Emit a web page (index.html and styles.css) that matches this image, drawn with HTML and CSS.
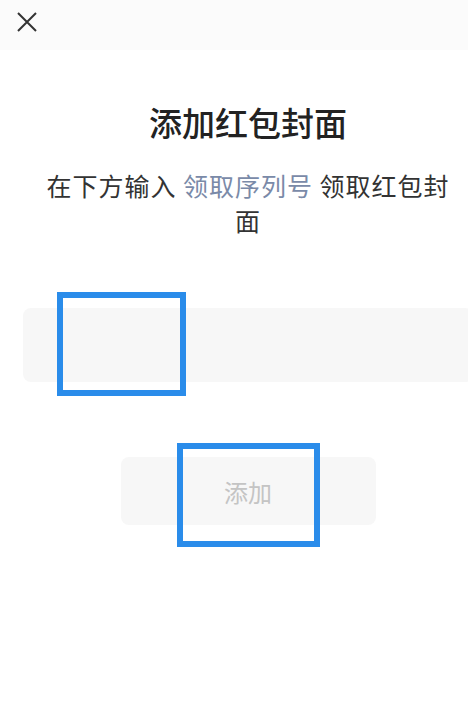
FILE: index.html
```html
<!DOCTYPE html>
<html lang="zh">
<head>
<meta charset="utf-8">
<link rel="stylesheet" href="styles.css">
</head>
<body>
<div class="page">
  <header class="topbar">
    <svg class="close" width="20" height="20" viewBox="0 0 20 20"><path d="M1 1L19 19M19 1L1 19" stroke="#333" stroke-width="2" fill="none"/></svg>
  </header>
  <main class="content">
    <h1 class="title">添加红包封面</h1>
    <p class="desc">在下方输入 <span class="link">领取序列号</span> 领取红包封面</p>
    <div class="field">
      <span class="mark mark-field"></span>
    </div>
    <div class="btn">添加
      <span class="mark mark-btn"></span>
    </div>
  </main>
</div>
</body>
</html>
```
FILE: styles.css
```css
html, body {
  margin: 0;
  padding: 0;
  overflow: hidden;
  background: #fff;
}
.page {
  width: 496px;
  height: 702px;
  font-family: "Noto Sans CJK SC", "Noto Sans", sans-serif;
}
.topbar {
  height: 50px;
  background: #fbfbfb;
  padding: 12px 0 0 17px;
  box-sizing: border-box;
}
.close { display: block; }
.content {
  padding: 0 23px;
  display: flex;
  flex-direction: column;
}
.title {
  margin: 52px 0 0;
  font-size: 33px;
  line-height: 40px;
  font-weight: 500;
  color: #222;
  text-align: center;
}
.desc {
  margin: 26px 20px 0;
  font-size: 25px;
  line-height: 35px;
  letter-spacing: 1px;
  color: #333;
  text-align: center;
}
.link { color: #7a8aa8; }
.field {
  position: relative;
  margin-top: 70px;
  height: 74px;
  background: #f7f7f7;
  border-radius: 8px;
}
.btn {
  position: relative;
  align-self: center;
  margin-top: 75px;
  width: 255px;
  height: 68px;
  background: #f7f7f7;
  border-radius: 8px;
  color: #c4c4c4;
  font-size: 24px;
  display: flex;
  align-items: center;
  justify-content: center;
}
.mark {
  position: absolute;
  border: 6px solid #2a8cea;
  box-sizing: border-box;
}
.mark-field {
  left: 34px;
  top: -16px;
  width: 129px;
  height: 104px;
}
.mark-btn {
  left: 56px;
  top: -14px;
  width: 143px;
  height: 104px;
}
```
